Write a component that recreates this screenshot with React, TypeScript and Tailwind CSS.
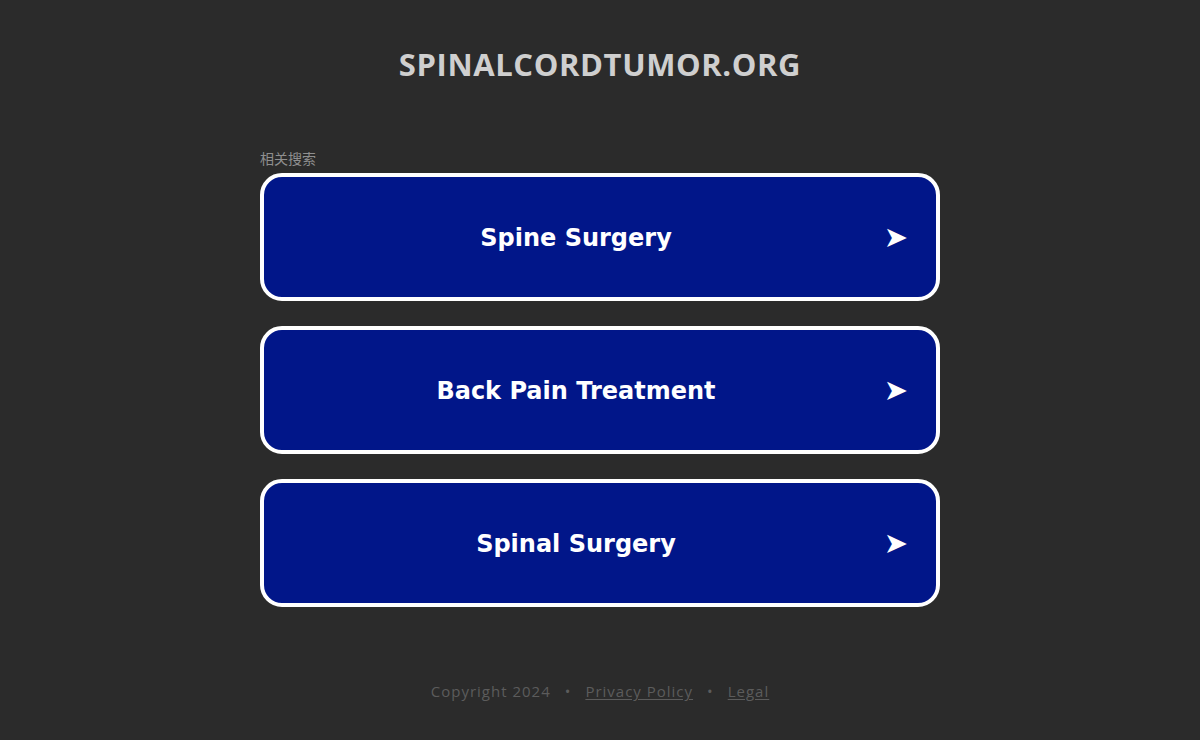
const links = ["Spine Surgery", "Back Pain Treatment", "Spinal Surgery"];

export default function App() {
  return (
    <div className="min-h-[740px] bg-[#2b2b2b] flex flex-col items-center font-['Open_Sans',sans-serif]">
      {/* Domain title */}
      <h1 className="mt-[44px] text-[31px] leading-[40px] font-bold text-[#cfcfcf] tracking-[0.6px]">
        SPINALCORDTUMOR.ORG
      </h1>

      {/* Related searches */}
      <div className="mt-[66px] w-[680px]">
        <div className="text-[14px] leading-[17px] text-[#8f8f8f] font-['Noto_Sans_CJK_SC',sans-serif] mb-[6px]">
          相关搜索
        </div>
        <div className="flex flex-col gap-[25px]">
          {links.map((label) => (
            <a
              key={label}
              href="#"
              className="h-[128px] flex items-center bg-[#011689] border-4 border-white rounded-[22px] text-white"
            >
              <span className="flex-1 text-center pl-[28px] pt-[2px] text-[24px] font-bold font-['DejaVu_Sans',Verdana,sans-serif]">
                {label}
              </span>
              <span className="w-[76px] pr-[28px] text-right text-[29px] leading-none font-['DejaVu_Sans',sans-serif]">
                ➤
              </span>
            </a>
          ))}
        </div>
      </div>

      {/* Footer */}
      <div className="mt-[73px] flex items-center gap-[14px] text-[15px] tracking-[1px] text-[#5c5c5c]">
        <span>Copyright 2024</span>
        <span>•</span>
        <a href="#" className="underline underline-offset-2">Privacy Policy</a>
        <span>•</span>
        <a href="#" className="underline underline-offset-2">Legal</a>
      </div>
    </div>
  );
}
